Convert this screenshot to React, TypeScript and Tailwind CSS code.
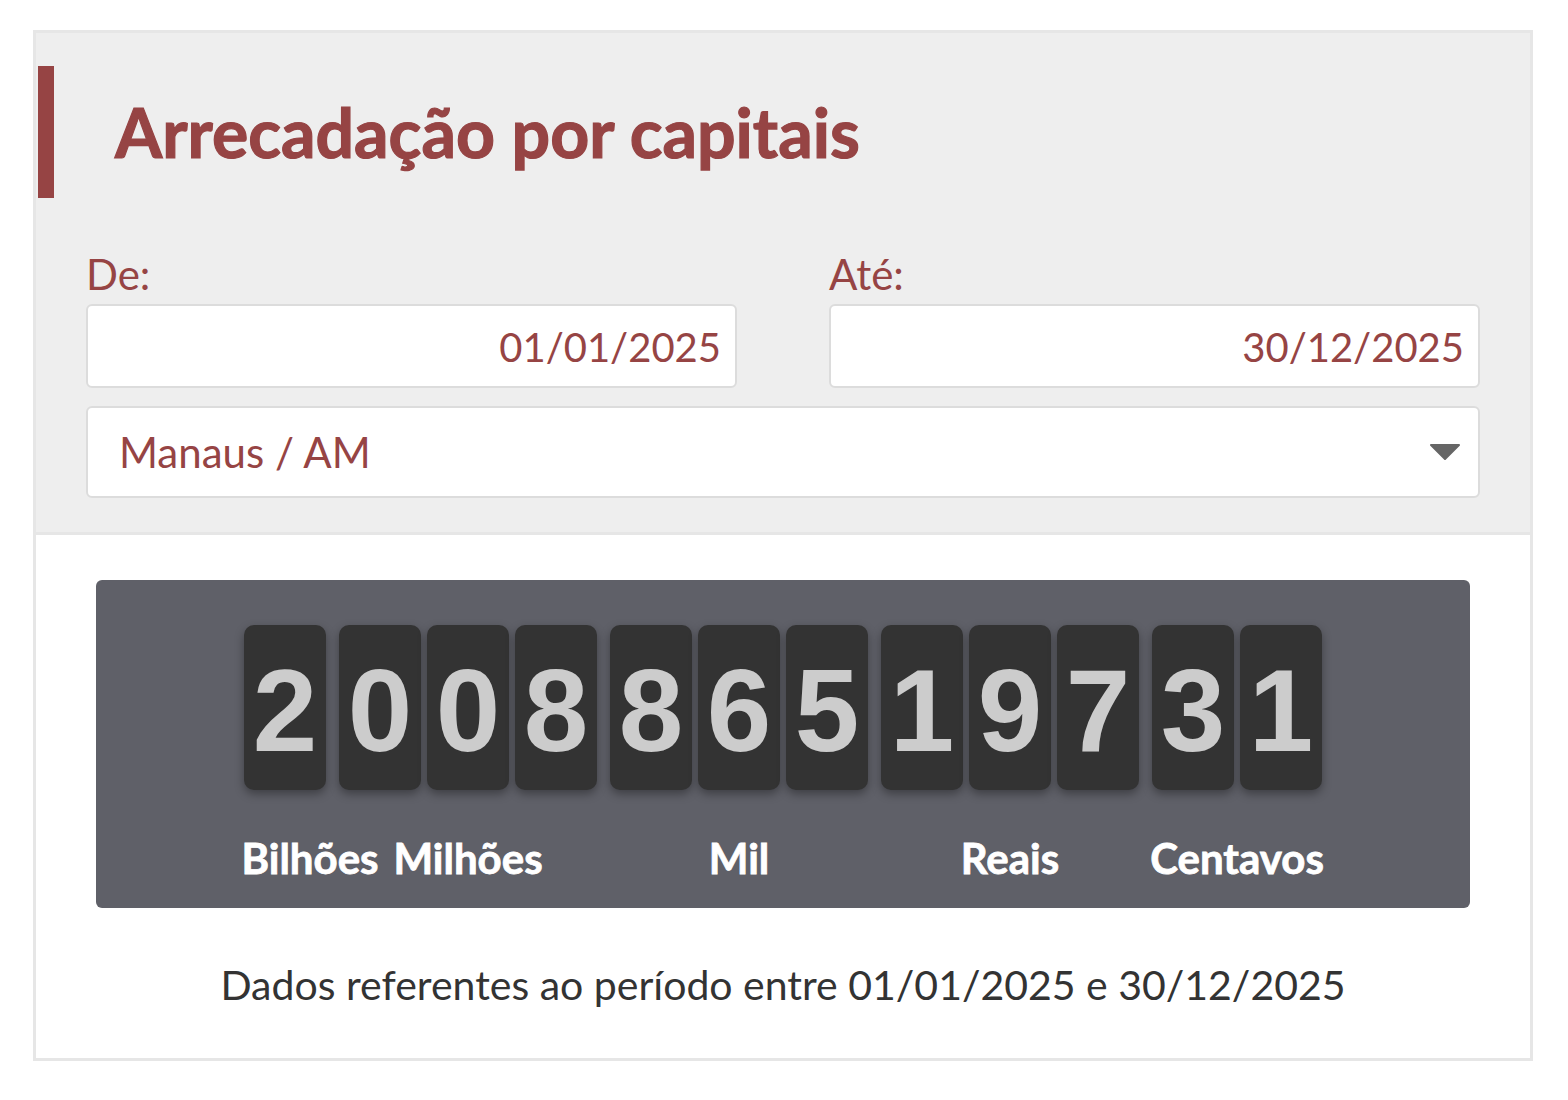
import React from 'react';

const RED = 'text-[#964444]';

const GROUPS: { digits: string; label: string; shift?: string }[] = [
  { digits: '2', label: 'Bilhões', shift: 'translate-x-[25px]' },
  { digits: '008', label: 'Milhões' },
  { digits: '865', label: 'Mil' },
  { digits: '197', label: 'Reais' },
  { digits: '31', label: 'Centavos' },
];

function Tile({ d }: { d: string }) {
  return (
    <div className="w-[82px] h-[165px] rounded-[10px] bg-[#333333] shadow-[0_4px_10px_rgba(0,0,0,0.35)] flex items-center justify-center pt-[6px]">
      <span className="text-[116px] leading-none font-bold text-[#cccccc] font-['Liberation_Sans',Arial,sans-serif]">{d}</span>
    </div>
  );
}

function DateField({ label, value }: { label: string; value: string }) {
  return (
    <div className="flex-1 flex flex-col">
      <label className={`${RED} text-[42px] leading-[48px] mb-[6px]`}>{label}</label>
      <div className="h-[84px] bg-white border-2 border-[#dcdcdc] rounded-[6px] flex items-center justify-end pr-[14px] pt-[2px]">
        <span className={`${RED} text-[40px]`}>{value}</span>
      </div>
    </div>
  );
}

export default function App() {
  return (
    <div className="min-h-screen bg-white font-['Lato','Open_Sans',sans-serif] pt-[30px] pl-[33px]">
      <div className="w-[1500px] h-[1031px] border-[3px] border-[#e6e6e6] flex flex-col">
        {/* filtros */}
        <div className="bg-[#eeeeee] border-b-[3px] border-[#e6e6e6] pt-[33px] pb-[34px]">
          <div className="flex items-center h-[132px]">
            <div className="ml-[2px] w-[16px] h-full bg-[#964444]" />
            <h1 className={`${RED} ml-[61px] text-[68px] font-bold [-webkit-text-stroke:1.2px_#964444]`}>Arrecadação por capitais</h1>
          </div>
          <div className="px-[50px] mt-[52px]">
            <div className="flex gap-[92px]">
              <DateField label="De:" value="01/01/2025" />
              <DateField label="Até:" value="30/12/2025" />
            </div>
            <div className="mt-[18px] h-[92px] bg-white border-2 border-[#dcdcdc] rounded-[6px] flex items-center justify-between pl-[31px] pr-[18px]">
              <span className={`${RED} text-[42px]`}>Manaus / AM</span>
              <svg width="30" height="16" viewBox="0 0 30 16">
                <path d="M1 1 L29 1 L15 15 Z" fill="#666666" stroke="#666666" strokeWidth="2" strokeLinejoin="round" />
              </svg>
            </div>
          </div>
        </div>

        {/* contador */}
        <div className="flex-1 bg-white px-[60px] pt-[45px]">
          <div className="h-[328px] rounded-[6px] bg-[#5f6068] flex justify-center pt-[45px] gap-[13px]">
            {GROUPS.map(g => (
              <div key={g.label} className="flex flex-col items-center">
                <div className="flex gap-[6px]">
                  {g.digits.split('').map((d, i) => <Tile key={i} d={d} />)}
                </div>
                <div className="mt-[43px] flex justify-center">
                  <span className={`w-0 flex justify-center whitespace-nowrap text-white text-[42px] leading-[50px] font-bold [-webkit-text-stroke:0.8px_#ffffff] ${g.shift ?? ''}`}>{g.label}</span>
                </div>
              </div>
            ))}
          </div>
          <p className="mt-[52px] text-center text-[#333333] text-[41px] leading-[50px]">
            Dados referentes ao período entre 01/01/2025 e 30/12/2025
          </p>
        </div>
      </div>
    </div>
  );
}
